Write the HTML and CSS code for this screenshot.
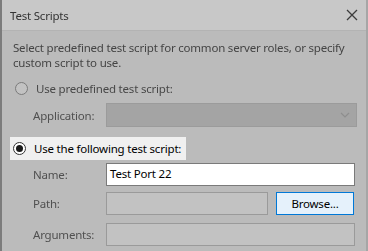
FILE: index.html
```html
<!DOCTYPE html>
<html lang="en">
<head>
    <meta charset="UTF-8">
    <title>Test Scripts</title>
    <link rel="stylesheet" href="styles.css">
</head>
<body>
<div class="window">
    <div class="titleBar">
        <span class="title dim">Test Scripts</span>
        <span class="closeBn dim">
            <svg width="12" height="12" viewBox="0 0 12 12"><path d="M1 1L11 11M11 1L1 11" stroke="#3c3c3c" stroke-width="1.3"/></svg>
        </span>
    </div>
    <div class="content">
        <p class="desc dim">Select predefined test script for common server roles, or specify<br>custom script to use.</p>
        <div class="radioRow first dim">
            <span class="radio"></span>
            <span>Use predefined test script:</span>
        </div>
        <div class="fieldRow appRow">
            <span class="label dim">Application:</span>
            <div class="select dim">
                <svg width="10" height="6" viewBox="0 0 10 6"><path d="M1 1L5 5L9 1" fill="none" stroke="#8e8e8e" stroke-width="1.2"/></svg>
            </div>
        </div>
        <div class="radioRow active">
            <span class="radio checked"></span>
            <span>Use the following test script:</span>
        </div>
        <div class="fieldRow nameRow">
            <span class="label dim">Name:</span>
            <div class="input">Test Port 22</div>
        </div>
        <div class="fieldRow pathRow">
            <span class="label dim">Path:</span>
            <div class="box short dim"></div>
            <div class="browseBn">Browse...</div>
        </div>
        <div class="fieldRow argRow">
            <span class="label dim">Arguments:</span>
            <div class="box dim"></div>
        </div>
    </div>
</div>
</body>
</html>
```

FILE: styles.css
```css
*{
    margin: 0;
    padding: 0;
    box-sizing: border-box;
}
body
{
    width: 368px;
    height: 251px;
    overflow: hidden;
    font-family: "Noto Sans", "Open Sans", sans-serif;
    font-size: 11.5px;
    letter-spacing: -0.2px;
    background: #bbbbbb;
}
.window
{
    width: 368px;
    height: 251px;
    background: #bbbbbb;
    border-left: 2px solid #7c7c7c;
    border-right: 2px solid #a6a6a6;
}
.dim
{
    filter: blur(0.6px);
    color: #444444;
}
.titleBar
{
    height: 31px;
    background: #c8c8c8;
    border-bottom: 1px solid #b3b3b3;
    display: flex;
    align-items: center;
    justify-content: space-between;
    padding: 0 8px 0 8px;
}
.title
{
    color: #333333;
}
.closeBn
{
    display: flex;
}
.content
{
    padding-left: 11px;
}
.desc
{
    margin-top: 9px;
    line-height: 15px;
    white-space: nowrap;
}
.radioRow
{
    display: flex;
    align-items: center;
    height: 18px;
    gap: 8px;
    padding-left: 2px;
    white-space: nowrap;
}
.radioRow.first
{
    margin-top: 9px;
    color: #484848;
}
.radio
{
    flex: none;
    width: 13px;
    height: 13px;
    border-radius: 50%;
    border: 1px solid #7a7a7a;
    background: #c2c2c2;
    position: relative;
}
.radioRow.active
{
    margin-top: 10px;
    margin-left: -3px;
    padding-left: 3px;
    width: 176px;
    height: 23px;
    background: #f0f0f0;
    color: #000;
}
.radio.checked
{
    border-color: #333333;
    background: #ffffff;
}
.radio.checked::after
{
    content: "";
    position: absolute;
    left: 2px;
    top: 2px;
    width: 7px;
    height: 7px;
    border-radius: 50%;
    background: #1a1a1a;
}
.fieldRow
{
    display: flex;
    align-items: center;
    height: 23px;
    padding-left: 20px;
}
.label
{
    flex: none;
    width: 73px;
    color: #505050;
}
.appRow
{
    margin-top: 6px;
    height: 24px;
}
.select
{
    width: 251px;
    height: 24px;
    background: #a4a4a4;
    border: 1px solid #9b9b9b;
    display: flex;
    align-items: center;
    justify-content: flex-end;
    padding-right: 6px;
}
.nameRow
{
    margin-top: 3px;
}
.input
{
    width: 249px;
    height: 23px;
    background: #ffffff;
    border: 1px solid #7a7a7a;
    color: #000;
    padding-left: 3px;
    line-height: 20px;
}
.pathRow
{
    margin-top: 6px;
}
.box
{
    width: 249px;
    height: 23px;
    background: #c2c2c2;
    border: 1px solid #9a9a9a;
}
.box.short
{
    width: 162px;
}
.browseBn
{
    margin-left: 8px;
    width: 78px;
    height: 23px;
    background: #e5f1fb;
    border: 1px solid #0078d7;
    color: #000;
    text-align: center;
    line-height: 21px;
}
.argRow
{
    margin-top: 8px;
}
```
